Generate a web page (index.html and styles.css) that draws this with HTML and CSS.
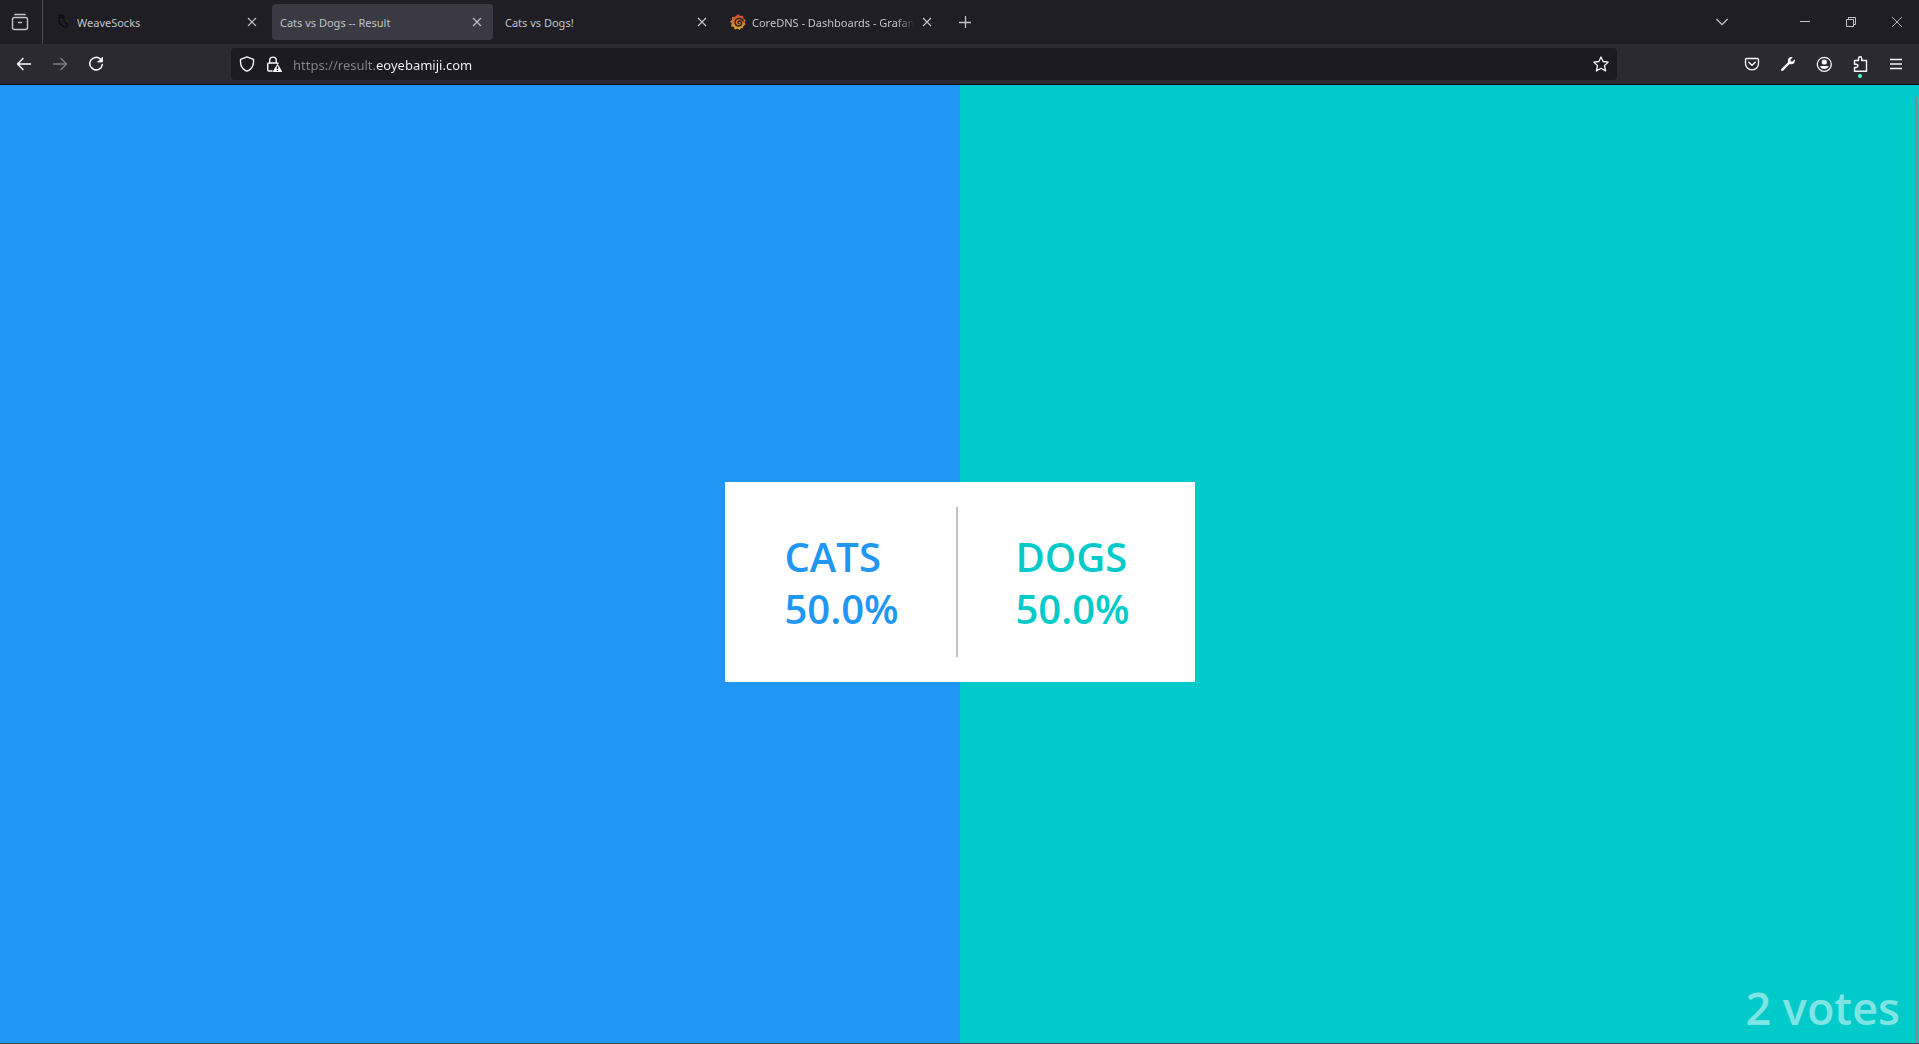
FILE: index.html
```html
<!DOCTYPE html>
<html lang="en">
<head>
<meta charset="utf-8">
<title>Cats vs Dogs -- Result</title>
<link rel="stylesheet" href="styles.css">
</head>
<body>
<header class="browser">
  <div class="tabbar">
    <button class="view-button" aria-label="Recent browsing">
      <svg width="18" height="18" viewBox="0 0 18 18" fill="none" stroke="currentColor" stroke-width="1.4"><path d="M3.600 2.200Q3.800 1.500 4.500 1.500H13.500Q14.200 1.500 14.400 2.200"/><path d="M1.500 6.500Q1.500 4.500 3.500 4.500H14.500Q16.500 4.500 16.500 6.500V14.500Q16.500 16.500 14.500 16.500H3.500Q1.500 16.500 1.500 14.500Z"/><path d="M7 9.500H11"/></svg>
    </button>
    <nav class="tabs" aria-label="Tabs">
      <div class="tab">
        <svg class="favicon" width="16" height="16" viewBox="0 0 16 16" fill="none" stroke="#0d0d10" stroke-width="1.3"><path d="M4 1.500H8.600L9.200 8L12.300 10.200Q13.200 12.800 11 13.200L8.700 12.500L4.600 9.400Q3.800 8.500 4.400 7Z"/><path d="M4 3.500H9"/></svg>
        <a class="tab-title" href="#">WeaveSocks</a>
        <button class="tab-close" aria-label="Close tab"><svg width="10" height="10" viewBox="0 0 10 10" stroke="currentColor" stroke-width="1.1"><path d="M1 1L9 9M9 1L1 9"/></svg></button>
      </div>
      <div class="tab tab-active">
        <a class="tab-title" href="#">Cats vs Dogs -- Result</a>
        <button class="tab-close" aria-label="Close tab"><svg width="10" height="10" viewBox="0 0 10 10" stroke="currentColor" stroke-width="1.1"><path d="M1 1L9 9M9 1L1 9"/></svg></button>
      </div>
      <div class="tab">
        <a class="tab-title" href="#">Cats vs Dogs!</a>
        <button class="tab-close" aria-label="Close tab"><svg width="10" height="10" viewBox="0 0 10 10" stroke="currentColor" stroke-width="1.1"><path d="M1 1L9 9M9 1L1 9"/></svg></button>
      </div>
      <div class="tab">
        <svg class="favicon" width="16" height="16" viewBox="0 0 16 16"><defs><linearGradient id="flame" x1="0" y1="0" x2="0" y2="1"><stop offset="0" stop-color="#d6432b"/><stop offset=".5" stop-color="#d6762a"/><stop offset="1" stop-color="#dcae26"/></linearGradient></defs><path fill="url(#flame)" d="M8.300 0L10 2L13 1.800L13.400 4.300L15.700 6.200L14.600 8L15.600 10.500L13.400 12L12.600 14.200L11 14L9.800 16L7.600 14.600L4.600 15.600L4 13L1 12.200L1.800 9.600L0 7.400L2 5.800L2 3L5 2.800Z"/><path fill="none" stroke="#1f1e25" stroke-width="1.300" d="M13.600 7.400Q12.400 4.400 9 4.400Q5 4.800 5 8.600Q5.400 12 8.800 12Q11.800 11.600 11.600 8.800Q11 6.900 9.200 7Q7.400 7.600 8 9.200Q8.600 10 9.400 9.500"/></svg>
        <a class="tab-title tab-title-long" href="#">CoreDNS - Dashboards - Grafana</a>
        <button class="tab-close" aria-label="Close tab"><svg width="10" height="10" viewBox="0 0 10 10" stroke="currentColor" stroke-width="1.1"><path d="M1 1L9 9M9 1L1 9"/></svg></button>
      </div>
    </nav>
    <button class="icon-button" aria-label="New tab"><svg width="14" height="14" viewBox="0 0 14 14" stroke="currentColor" stroke-width="1.3"><path d="M1 7.500H13M7.500 1V13"/></svg></button>
    <div class="window-tools">
      <button class="icon-button" aria-label="List all tabs"><svg width="14" height="14" viewBox="0 0 14 14" fill="none" stroke="currentColor" stroke-width="1.3"><path d="M1.400 4L7 9.600L12.600 4"/></svg></button>
      <div class="window-controls">
        <button class="window-button" aria-label="Minimize"><svg width="10" height="10" viewBox="0 0 10 10" stroke="currentColor"><path d="M0 4.500H10"/></svg></button>
        <button class="window-button" aria-label="Restore"><svg width="10" height="10" viewBox="0 0 10 10" fill="none" stroke="currentColor"><path d="M.5 2.500H7.500V9.500H.5ZM2.500 2.500V.5H9.500V7.500H7.500"/></svg></button>
        <button class="window-button" aria-label="Close"><svg width="10" height="10" viewBox="0 0 10 10" stroke="currentColor" stroke-width=".9"><path d="M0 0L10 10M10 0L0 10"/></svg></button>
      </div>
    </div>
  </div>
  <div class="toolbar">
    <button class="icon-button" aria-label="Back"><svg width="16" height="16" viewBox="0 0 16 16" fill="none" stroke="currentColor" stroke-width="1.4" stroke-linecap="round" stroke-linejoin="round"><path d="M14.500 8H1.500M7 2.500L1.500 8L7 13.500"/></svg></button>
    <button class="icon-button" aria-label="Forward" disabled><svg width="16" height="16" viewBox="0 0 16 16" fill="none" stroke="currentColor" stroke-width="1.4" stroke-linecap="round" stroke-linejoin="round"><path d="M1.500 8H14.500M9 2.500L14.500 8L9 13.500"/></svg></button>
    <button class="icon-button" aria-label="Reload"><svg width="16" height="16" viewBox="0 0 16 16" fill="none" stroke="currentColor" stroke-width="1.5" stroke-linecap="round"><path d="M12.600 3.300A6.300 6.300 0 1 0 14.300 8.600"/><path d="M14.500 1.500V6H10Z" fill="currentColor" stroke-width=".8" stroke-linejoin="round"/></svg></button>
    <form class="urlbar">
      <svg width="16" height="16" viewBox="0 0 16 16" fill="none" stroke="currentColor" stroke-width="1.4" stroke-linejoin="round"><path d="M8 .9L14.500 3.300Q15 9.800 11.800 12.800Q9.800 14.700 8 15.200Q6.200 14.700 4.200 12.800Q1 9.800 1.500 3.300Z"/></svg>
      <svg width="16" height="16" viewBox="0 0 16 16" fill="none" stroke="currentColor" stroke-width="1.4"><path d="M3.700 7V4.400A3.300 3.300 0 0 1 10.300 4.400V7M6.600 15H3Q1.700 15 1.700 13.700V8.300Q1.700 7 3 7H11Q12 7 12.200 7.800"/><path d="M11.500 8.400L15.700 15.500H7.300Z" fill="currentColor" stroke-width="1" stroke-linejoin="round"/><path d="M11.500 10.300V13M11.500 13.800V15" stroke="#1c1b22" stroke-width="1.400"/></svg>
      <input class="url" type="text" aria-label="Address" value="https://result.eoyebamiji.com">
      <button class="star" type="button" aria-label="Bookmark this page"><svg width="16" height="16" viewBox="0 0 16 16" fill="none" stroke="currentColor" stroke-width="1.300" stroke-linejoin="round"><path d="M8 1L10.100 5.500L15.200 6.100L11.500 9.600L12.600 14.900L8 12.300L3.400 14.900L4.500 9.600L.8 6.100L5.900 5.500Z"/></svg></button>
    </form>
    <button class="icon-button" aria-label="Save to Pocket"><svg width="16" height="16" viewBox="0 0 16 16" fill="none" stroke="currentColor" stroke-width="1.300" stroke-linecap="round" stroke-linejoin="round"><path d="M2.800 2.500H13.200Q14.500 2.500 14.500 3.800V7.500A6.500 6.300 0 0 1 1.500 7.500V3.800Q1.500 2.500 2.800 2.500Z"/><path d="M4.800 6.200L8 9.200L11.200 6.200"/></svg></button>
    <button class="icon-button" aria-label="Developer tools"><svg width="16" height="16" viewBox="0 0 16 16" fill="currentColor"><path d="M12.800 1.200Q10.500.4 8.800 2Q7.300 3.700 8 6.200L1.500 12.700Q.6 14 1.400 14.700Q2.200 15.300 3.300 14.500L9.800 8Q12.300 8.700 14 7.200Q15.600 5.500 14.800 3.200L12.500 5.500L10.700 5.300L10.500 3.500Z"/></svg></button>
    <button class="icon-button" aria-label="Account"><svg width="16" height="16" viewBox="0 0 16 16" fill="currentColor"><circle cx="8.300" cy="8.300" r="7" fill="none" stroke="currentColor" stroke-width="1.300"/><circle cx="8.300" cy="6" r="2.600"/><path d="M4 10H12.600Q11.800 13 8.300 13Q4.800 13 4 10Z"/></svg></button>
    <button class="icon-button extensions" aria-label="Extensions"><svg width="16" height="16" viewBox="0 0 16 16" fill="none" stroke="currentColor" stroke-width="1.400" stroke-linejoin="round"><path d="M2.500 4.500H6.500V2.500Q6.600.8 8.200.8Q9.600.8 9.700 2.500V4.500H14.500V15.300H2.500V11.500H4.200Q6 11.200 6 9.800Q6 8.400 4.200 8.200H2.500Z"/></svg></button>
    <button class="icon-button" aria-label="Menu"><svg width="16" height="16" viewBox="0 0 16 16" stroke="currentColor" stroke-width="1.300"><path d="M2 3.500H14M2 8H14M2 12.500H14"/></svg></button>
  </div>
</header>
<main class="page">
  <section class="result">
    <div class="choice cats">
      <div class="label">CATS</div>
      <div class="stat">50.0%</div>
    </div>
    <div class="divider"></div>
    <div class="choice dogs">
      <div class="label">DOGS</div>
      <div class="stat">50.0%</div>
    </div>
  </section>
  <div class="votes">2 votes</div>
  <div class="scroll-thumb"></div>
</main>
</body>
</html>
```
FILE: styles.css
```css
* {
  box-sizing: border-box;
}

body {
  display: flex;
  flex-direction: column;
  min-height: 100vh;
  margin: 0;
  font-family: "Open Sans", sans-serif;
}

button {
  display: flex;
  align-items: center;
  justify-content: center;
  padding: 0;
  border: 0;
  background: none;
  color: inherit;
}

svg {
  flex: none;
}

.browser {
  border-bottom: 1px solid #0c0c0d;
  background: #2b2a33;
  color: #fbfbfe;
  font-family: "Noto Sans", sans-serif;
}

.tabbar {
  display: flex;
  align-items: center;
  height: 44px;
  background: #1f1e25;
  color: #c3c3c8;
}

.view-button {
  width: 43px;
  height: 44px;
  padding-right: 2px;
  border-right: 1px solid #4b4a54;
}

.tabs {
  display: flex;
  gap: 4px;
  padding: 0 4px;
}

.tab {
  display: flex;
  align-items: center;
  width: 221px;
  height: 36px;
  padding: 0 4px 0 8px;
  border-radius: 4px;
}

.tab-active {
  background: #3a3944;
}

.favicon {
  margin-right: 6px;
}

.tab-title {
  flex: 1;
  overflow: hidden;
  padding-top: 2px;
  color: inherit;
  font-size: 11px;
  font-variant-ligatures: none;
  line-height: 20px;
  text-decoration: none;
  white-space: nowrap;
}

.tab-title-long {
  mask-image: linear-gradient(to left, transparent, #000 20px);
}

.tab-close {
  width: 24px;
  height: 24px;
}

.icon-button {
  width: 36px;
  height: 32px;
}

.icon-button:disabled {
  opacity: 0.4;
}

.window-tools {
  display: flex;
  align-items: center;
  gap: 42px;
  margin: 0 -1px 0 auto;
}

.window-controls {
  display: flex;
}

.window-button {
  width: 46px;
  height: 44px;
}

.toolbar {
  display: flex;
  align-items: center;
  height: 40px;
  padding: 0 5px 0 6px;
}

.urlbar {
  display: flex;
  flex: 1;
  align-items: center;
  gap: 11px;
  height: 32px;
  margin: 0 117px;
  padding: 0 8px;
  border-radius: 4px;
  background: #1c1b22;
}

.url {
  flex: 1;
  min-width: 0;
  height: 26px;
  padding: 2px 0 0;
  border: 0;
  outline: 0;
  background: linear-gradient(to right, #85848c 82px, #fbfbfe 82px);
  background-clip: text;
  color: transparent;
  font: 13px/24px "Noto Sans", sans-serif;
}

.extensions {
  position: relative;
}

.extensions::after {
  position: absolute;
  bottom: 2px;
  left: 16px;
  width: 4px;
  height: 4px;
  border-radius: 50%;
  background: #54ffbd;
  content: "";
}

.page {
  position: relative;
  display: flex;
  flex: 1;
  align-items: center;
  justify-content: center;
  padding-top: 36px;
  border-bottom: 1px solid #3c4a50;
  background: linear-gradient(to right, #2196f3 50%, #00cbca 50%);
}

.result {
  display: grid;
  grid-template-columns: 1fr 2px 1fr;
  align-items: center;
  width: 470px;
  height: 200px;
  padding-right: 6px;
  background: #fff;
}

.choice {
  padding-top: 2px;
  font-size: 40px;
  font-weight: 600;
  line-height: 52px;
}

.cats {
  padding-left: 60px;
  color: #2196f3;
}

.dogs {
  padding-left: 58px;
  color: #00cbca;
}

.divider {
  height: 150px;
  background: #bcc6c8;
}

.votes {
  position: absolute;
  right: 19px;
  bottom: 5px;
  color: rgba(255, 255, 255, 0.5);
  font-size: 45px;
  font-weight: 600;
  line-height: 60px;
}

.scroll-thumb {
  position: absolute;
  top: 12px;
  right: 2px;
  bottom: 0;
  width: 2px;
  background: #808a8a;
}
```
